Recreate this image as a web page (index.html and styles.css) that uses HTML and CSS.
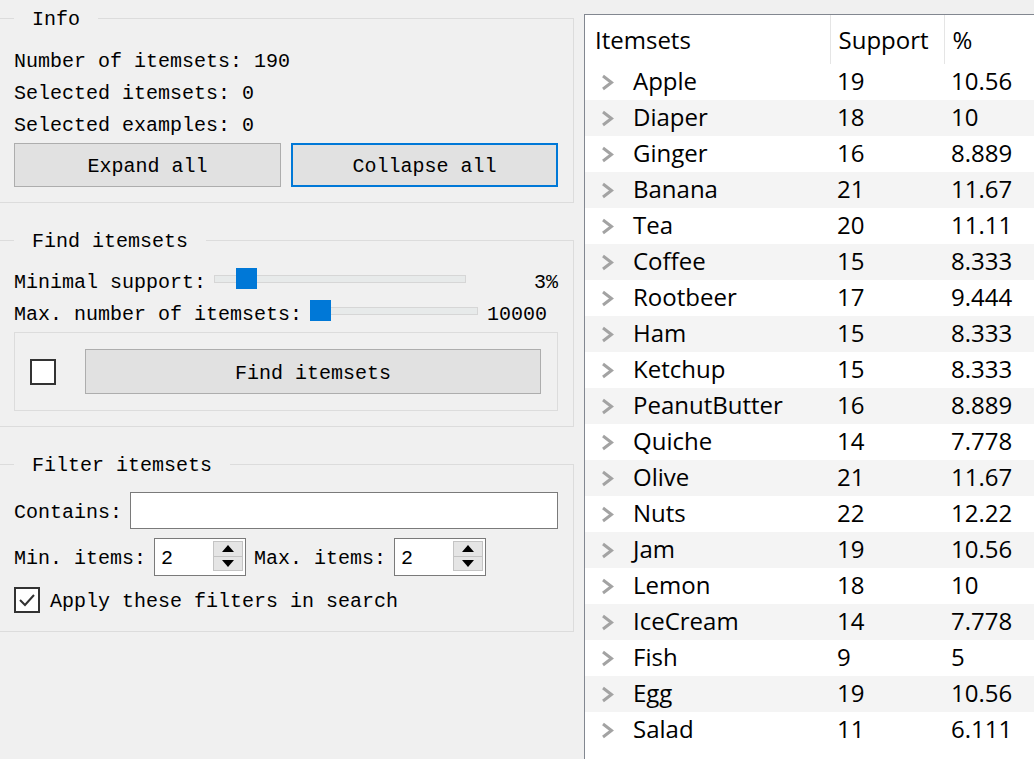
FILE: index.html
```html
<!DOCTYPE html>
<html>
<head>
<meta charset="utf-8">
<title>Frequent Itemsets</title>
<link rel="stylesheet" href="styles.css">
</head>
<body>
<div class="app">
  <div class="left">
    <fieldset class="group group-info">
      <legend>Info</legend>
      <div class="line">Number of itemsets: 190</div>
      <div class="line">Selected itemsets: 0</div>
      <div class="line">Selected examples: 0</div>
      <div class="btn-row">
        <button class="btn">Expand all</button>
        <button class="btn btn-focus">Collapse all</button>
      </div>
    </fieldset>

    <fieldset class="group group-find">
      <legend>Find itemsets</legend>
      <div class="line slider-row">
        <span class="label">Minimal support:</span>
        <div class="slider slider-support">
          <div class="track"></div>
          <div class="thumb" style="left:22px"></div>
        </div>
        <span class="value value-support">3%</span>
      </div>
      <div class="line slider-row">
        <span class="label">Max. number of itemsets:</span>
        <div class="slider slider-max">
          <div class="track"></div>
          <div class="thumb" style="left:0px"></div>
        </div>
        <span class="value value-max">10000</span>
      </div>
      <div class="find-box">
        <span class="checkbox"></span>
        <button class="btn btn-find">Find itemsets</button>
      </div>
    </fieldset>

    <fieldset class="group group-filter">
      <legend>Filter itemsets</legend>
      <div class="form-row">
        <span class="label">Contains:</span>
        <span class="text-input"></span>
      </div>
      <div class="form-row row-spin">
        <span class="label">Min. items:</span>
        <span class="spinbox">
          <span class="spin-text">2</span>
          <span class="spin-buttons">
            <span class="spin-btn"><svg width="12" height="7" viewBox="0 0 12 7"><polygon points="6,0 12,7 0,7" fill="#000"/></svg></span>
            <span class="spin-btn"><svg width="12" height="7" viewBox="0 0 12 7"><polygon points="0,0 12,0 6,7" fill="#000"/></svg></span>
          </span>
        </span>
        <span class="label label-max">Max. items:</span>
        <span class="spinbox">
          <span class="spin-text">2</span>
          <span class="spin-buttons">
            <span class="spin-btn"><svg width="12" height="7" viewBox="0 0 12 7"><polygon points="6,0 12,7 0,7" fill="#000"/></svg></span>
            <span class="spin-btn"><svg width="12" height="7" viewBox="0 0 12 7"><polygon points="0,0 12,0 6,7" fill="#000"/></svg></span>
          </span>
        </span>
      </div>
      <div class="check-row">
        <span class="checkbox checked"><svg width="22" height="22" viewBox="0 0 22 22"><polyline points="4,11 9,16 18,6" fill="none" stroke="#333" stroke-width="2"/></svg></span>
        <span class="check-label">Apply these filters in search</span>
      </div>
    </fieldset>
  </div>

  <div class="tree">
    <table>
      <colgroup><col class="c1"><col class="c2"><col class="c3"></colgroup>
      <thead>
        <tr><th class="h1">Itemsets</th><th class="h2">Support</th><th class="h3">%</th></tr>
      </thead>
      <tbody>
        <tr><td class="name"><span class="cell-name"><svg class="chev" width="13" height="17" viewBox="0 0 13 17"><polyline points="2,2 10.5,8.5 2,15" fill="none" stroke="#a3a3a3" stroke-width="3"/></svg>Apple</span></td><td>19</td><td>10.56</td></tr>
        <tr><td class="name"><span class="cell-name"><svg class="chev" width="13" height="17" viewBox="0 0 13 17"><polyline points="2,2 10.5,8.5 2,15" fill="none" stroke="#a3a3a3" stroke-width="3"/></svg>Diaper</span></td><td>18</td><td>10</td></tr>
        <tr><td class="name"><span class="cell-name"><svg class="chev" width="13" height="17" viewBox="0 0 13 17"><polyline points="2,2 10.5,8.5 2,15" fill="none" stroke="#a3a3a3" stroke-width="3"/></svg>Ginger</span></td><td>16</td><td>8.889</td></tr>
        <tr><td class="name"><span class="cell-name"><svg class="chev" width="13" height="17" viewBox="0 0 13 17"><polyline points="2,2 10.5,8.5 2,15" fill="none" stroke="#a3a3a3" stroke-width="3"/></svg>Banana</span></td><td>21</td><td>11.67</td></tr>
        <tr><td class="name"><span class="cell-name"><svg class="chev" width="13" height="17" viewBox="0 0 13 17"><polyline points="2,2 10.5,8.5 2,15" fill="none" stroke="#a3a3a3" stroke-width="3"/></svg>Tea</span></td><td>20</td><td>11.11</td></tr>
        <tr><td class="name"><span class="cell-name"><svg class="chev" width="13" height="17" viewBox="0 0 13 17"><polyline points="2,2 10.5,8.5 2,15" fill="none" stroke="#a3a3a3" stroke-width="3"/></svg>Coffee</span></td><td>15</td><td>8.333</td></tr>
        <tr><td class="name"><span class="cell-name"><svg class="chev" width="13" height="17" viewBox="0 0 13 17"><polyline points="2,2 10.5,8.5 2,15" fill="none" stroke="#a3a3a3" stroke-width="3"/></svg>Rootbeer</span></td><td>17</td><td>9.444</td></tr>
        <tr><td class="name"><span class="cell-name"><svg class="chev" width="13" height="17" viewBox="0 0 13 17"><polyline points="2,2 10.5,8.5 2,15" fill="none" stroke="#a3a3a3" stroke-width="3"/></svg>Ham</span></td><td>15</td><td>8.333</td></tr>
        <tr><td class="name"><span class="cell-name"><svg class="chev" width="13" height="17" viewBox="0 0 13 17"><polyline points="2,2 10.5,8.5 2,15" fill="none" stroke="#a3a3a3" stroke-width="3"/></svg>Ketchup</span></td><td>15</td><td>8.333</td></tr>
        <tr><td class="name"><span class="cell-name"><svg class="chev" width="13" height="17" viewBox="0 0 13 17"><polyline points="2,2 10.5,8.5 2,15" fill="none" stroke="#a3a3a3" stroke-width="3"/></svg>PeanutButter</span></td><td>16</td><td>8.889</td></tr>
        <tr><td class="name"><span class="cell-name"><svg class="chev" width="13" height="17" viewBox="0 0 13 17"><polyline points="2,2 10.5,8.5 2,15" fill="none" stroke="#a3a3a3" stroke-width="3"/></svg>Quiche</span></td><td>14</td><td>7.778</td></tr>
        <tr><td class="name"><span class="cell-name"><svg class="chev" width="13" height="17" viewBox="0 0 13 17"><polyline points="2,2 10.5,8.5 2,15" fill="none" stroke="#a3a3a3" stroke-width="3"/></svg>Olive</span></td><td>21</td><td>11.67</td></tr>
        <tr><td class="name"><span class="cell-name"><svg class="chev" width="13" height="17" viewBox="0 0 13 17"><polyline points="2,2 10.5,8.5 2,15" fill="none" stroke="#a3a3a3" stroke-width="3"/></svg>Nuts</span></td><td>22</td><td>12.22</td></tr>
        <tr><td class="name"><span class="cell-name"><svg class="chev" width="13" height="17" viewBox="0 0 13 17"><polyline points="2,2 10.5,8.5 2,15" fill="none" stroke="#a3a3a3" stroke-width="3"/></svg>Jam</span></td><td>19</td><td>10.56</td></tr>
        <tr><td class="name"><span class="cell-name"><svg class="chev" width="13" height="17" viewBox="0 0 13 17"><polyline points="2,2 10.5,8.5 2,15" fill="none" stroke="#a3a3a3" stroke-width="3"/></svg>Lemon</span></td><td>18</td><td>10</td></tr>
        <tr><td class="name"><span class="cell-name"><svg class="chev" width="13" height="17" viewBox="0 0 13 17"><polyline points="2,2 10.5,8.5 2,15" fill="none" stroke="#a3a3a3" stroke-width="3"/></svg>IceCream</span></td><td>14</td><td>7.778</td></tr>
        <tr><td class="name"><span class="cell-name"><svg class="chev" width="13" height="17" viewBox="0 0 13 17"><polyline points="2,2 10.5,8.5 2,15" fill="none" stroke="#a3a3a3" stroke-width="3"/></svg>Fish</span></td><td>9</td><td>5</td></tr>
        <tr><td class="name"><span class="cell-name"><svg class="chev" width="13" height="17" viewBox="0 0 13 17"><polyline points="2,2 10.5,8.5 2,15" fill="none" stroke="#a3a3a3" stroke-width="3"/></svg>Egg</span></td><td>19</td><td>10.56</td></tr>
        <tr><td class="name"><span class="cell-name"><svg class="chev" width="13" height="17" viewBox="0 0 13 17"><polyline points="2,2 10.5,8.5 2,15" fill="none" stroke="#a3a3a3" stroke-width="3"/></svg>Salad</span></td><td>11</td><td>6.111</td></tr>
      </tbody>
    </table>
  </div>
</div>
</body>
</html>
```

FILE: styles.css
```css
html, body {
  margin: 0;
  padding: 0;
}

body {
  background: #f0f0f0;
  font-family: "Liberation Mono", "DejaVu Sans Mono", monospace;
  font-size: 20px;
  color: #000;
}

.app {
  display: flex;
  height: 759px;
  overflow: hidden;
}

/* ---------- left control panel ---------- */
.left {
  width: 574px;
  flex: none;
}

.group {
  margin: 0;
  min-width: 0;
  border: 1px solid #dcdcdc;
  border-left: none;
  padding: 12px 15px 15px 14px;
}

.group legend {
  padding: 4px 18px 0 18px;
  line-height: 24px;
  white-space: pre;
}

.group-info {
  margin-top: 4px;
}

.group-find {
  margin-top: 23px;
  padding-top: 11px;
}

.group-filter {
  margin-top: 23px;
  padding-top: 14px;
  padding-bottom: 18px;
}

.line {
  height: 32px;
  line-height: 36px;
  white-space: pre;
}

.btn-row {
  display: grid;
  grid-template-columns: 1fr 1fr;
  column-gap: 10px;
  margin-top: 3px;
}

.btn {
  height: 44px;
  margin: 0;
  padding: 3px 0 0 0;
  background: #e1e1e1;
  border: 1px solid #adadad;
  font: inherit;
  color: #000;
  white-space: pre;
}

.btn-focus {
  border: 2px solid #0078d7;
}

/* sliders */
.slider-row {
  display: flex;
  align-items: center;
}

.label {
  white-space: pre;
  flex: none;
}

.slider {
  position: relative;
  height: 21px;
  display: flex;
  align-items: center;
  margin-left: 8px;
  margin-bottom: 5px;
  flex: none;
}

.slider-support {
  width: 252px;
}

.slider-max {
  width: 168px;
}

.track {
  width: 100%;
  height: 8px;
  box-sizing: border-box;
  border: 1px solid #d6d6d6;
  background: #e7eaea;
}

.thumb {
  position: absolute;
  top: 0;
  width: 21px;
  height: 21px;
  background: #0078d7;
}

.value {
  white-space: pre;
  padding-top: 4px;
}

.slider-row .label {
  padding-top: 4px;
}

.value-support {
  flex: 1;
  text-align: right;
}

.value-max {
  margin-left: 9px;
}

.find-box {
  margin-top: 3px;
  height: 79px;
  box-sizing: border-box;
  border: 1px solid #dcdcdc;
  display: flex;
  align-items: center;
  padding: 0 16px 0 15px;
}

.checkbox {
  width: 26px;
  height: 26px;
  box-sizing: border-box;
  border: 2px solid #333;
  background: #fff;
  flex: none;
  display: flex;
  align-items: center;
  justify-content: center;
}

.btn-find {
  flex: 1;
  height: 45px;
  margin-left: 29px;
}

/* filter */
.form-row {
  display: flex;
  align-items: center;
  height: 37px;
}

.form-row .label {
  padding-top: 3px;
}

.row-spin {
  margin-top: 9px;
  height: 38px;
}

.text-input {
  flex: 1;
  height: 37px;
  margin-left: 8px;
  box-sizing: border-box;
  border: 1px solid #7a7a7a;
  background: #fff;
}

.spinbox {
  width: 92px;
  height: 38px;
  margin-left: 8px;
  box-sizing: border-box;
  border: 1px solid #7a7a7a;
  background: #fff;
  display: flex;
  align-items: stretch;
  flex: none;
}

.spin-text {
  flex: 1;
  padding-left: 6px;
  padding-top: 3px;
  display: flex;
  align-items: center;
}

.spin-buttons {
  width: 30px;
  margin: 2px 2px 4px 0;
  display: flex;
  flex-direction: column;
}

.spin-btn {
  flex: 1;
  background: #e5e5e5;
  border: 1px solid #c4c4c4;
  display: flex;
  align-items: center;
  justify-content: center;
}

.spin-btn + .spin-btn {
  border-top: none;
}

.label-max {
  margin-left: 8px;
}

.check-row {
  display: flex;
  align-items: center;
  margin-top: 11px;
  height: 26px;
}

.check-label {
  margin-left: 10px;
  padding-top: 3px;
  white-space: pre;
}

/* ---------- right tree view ---------- */
.tree {
  flex: 1;
  min-width: 0;
  margin-left: 10px;
  margin-top: 14px;
  border-top: 1px solid #828790;
  border-left: 1px solid #828790;
  background: #fff;
  font-family: "Open Sans", "Noto Sans", sans-serif;
  font-size: 24px;
  color: #000;
}

.tree table {
  border-collapse: collapse;
  table-layout: fixed;
  width: 100%;
}

.c1 { width: 245px; }
.c2 { width: 114px; }

.tree th {
  height: 49px;
  padding: 0 0 0 8px;
  font-weight: normal;
  text-align: left;
  border-right: 1px solid #e5e5e5;
  white-space: nowrap;
}

.tree th.h1 { padding-left: 10px; }
.tree th.h3 { border-right: none; padding-left: 8px; }

.tree tbody tr {
  height: 36px;
}

.tree td {
  padding: 0 0 3px 7px;
  white-space: nowrap;
}

.tree tbody tr:nth-child(even) {
  background: #f4f4f4;
}

.tree td.name {
  padding-left: 16px;
}

.cell-name {
  display: flex;
  align-items: center;
}

.chev {
  flex: none;
  margin-top: 3px;
  margin-right: 19px;
}
```
